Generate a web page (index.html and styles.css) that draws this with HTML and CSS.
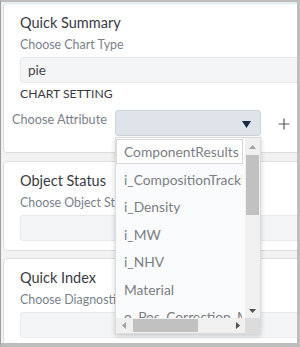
FILE: index.html
```html
<!DOCTYPE html>
<html>
<head>
<meta charset="utf-8">
<link rel="stylesheet" href="styles.css">
</head>
<body>
<div class="frame">
  <section class="card card-summary">
    <h2 class="card-title">Quick Summary</h2>
    <div class="field-label">Choose Chart Type</div>
    <div class="input-box"><span class="input-value">pie</span></div>
    <div class="section-head">CHART SETTING</div>
    <div class="attr-row">
      <div class="attr-label">Choose Attribute</div>
      <div class="select-wrap">
        <div class="select-box">
          <svg class="select-arrow" width="9" height="7" viewBox="0 0 9 7"><path d="M0 0 H9 L4.5 7 Z" fill="#1b2845"/></svg>
        </div>
        <div class="dropdown">
          <div class="dd-body">
            <ul class="dd-list">
              <li class="dd-item dd-item-active">ComponentResults</li>
              <li class="dd-item">i_CompositionTracking</li>
              <li class="dd-item">i_Density</li>
              <li class="dd-item">i_MW</li>
              <li class="dd-item">i_NHV</li>
              <li class="dd-item">Material</li>
              <li class="dd-item">o_Pos_Correction_Mode</li>
            </ul>
            <div class="vscroll">
              <svg class="sb-arrow" width="15" height="14" viewBox="0 0 15 14"><path d="M4 9 H11 L7.5 5 Z" fill="#a3a3a3"/></svg>
              <div class="vthumb-area"><div class="vthumb"></div></div>
              <svg class="sb-arrow" width="15" height="14" viewBox="0 0 15 14"><path d="M4 5 H11 L7.5 9 Z" fill="#505050"/></svg>
            </div>
          </div>
          <div class="hscroll">
            <div class="hscroll-track">
              <svg class="sb-arrow" width="14" height="15" viewBox="0 0 14 15"><path d="M9 4 V11 L5 7.5 Z" fill="#a3a3a3"/></svg>
              <div class="hthumb-area"><div class="hthumb"></div></div>
              <svg class="sb-arrow" width="14" height="15" viewBox="0 0 14 15"><path d="M5 4 V11 L9 7.5 Z" fill="#505050"/></svg>
            </div>
            <div class="sb-corner"></div>
          </div>
        </div>
      </div>
      <svg class="plus" width="12" height="12" viewBox="0 0 12 12"><path d="M6 0.5 V11.5 M0.5 6 H11.5" stroke="#5a5a5a" stroke-width="1.2"/></svg>
    </div>
  </section>
  <section class="card card-status">
    <h2 class="card-title">Object Status</h2>
    <div class="field-label">Choose Object Status</div>
    <div class="input-box"></div>
  </section>
  <section class="card card-index">
    <h2 class="card-title">Quick Index</h2>
    <div class="field-label">Choose Diagnostic Index</div>
    <div class="input-box"></div>
  </section>
</div>
</body>
</html>
```

FILE: styles.css
```css
* { box-sizing: border-box; }
html, body { margin: 0; padding: 0; }
body {
  width: 300px;
  height: 347px;
  overflow: hidden;
  font-family: Lato, "Open Sans", sans-serif;
  background: #f3f3f3;
}
.frame {
  width: 300px;
  height: 347px;
  overflow: hidden;
  background: #f2f2f2;
  border-left: 1px solid #9e9e9e;
  border-top: 2px solid #bdbdbd;
  border-right: 3px solid #bdbdbd;
  border-bottom: 4px solid #bdbdbd;
  padding: 1px 0 0 2px;
}
.card {
  background: #fff;
  border: 1px solid #dedede;
  border-radius: 4px;
  margin-right: -12px;
  padding: 9px 0 10px 16px;
}
.card-summary { border-top-color: #d5ecee; padding-bottom: 16px; }
.card-status { margin-top: 8px; padding-bottom: 9px; }
.card-index { margin-top: 7px; }
.card-title {
  margin: 0;
  font-size: 14.5px;
  line-height: 20px;
  font-weight: 400;
  color: #3a3a44;
}
.field-label {
  margin-top: 2px;
  font-size: 12.4px;
  line-height: 20px;
  font-weight: 400;
  color: #7a818c;
  white-space: nowrap;
}
.input-box {
  margin-top: 2px;
  height: 26px;
  background: #f4f5f6;
  border: 1px solid #e8e9ea;
  border-radius: 3px;
  padding-left: 7px;
  display: flex;
  align-items: center;
}
.input-value { font-size: 13.5px; color: #44444c; }
.section-head {
  margin-top: 1px;
  font-size: 12.2px;
  line-height: 20px;
  color: #3a3a44;
}
.attr-row {
  margin-top: 6px;
  margin-left: -8px;
  display: flex;
  align-items: center;
  height: 26px;
}
.attr-label {
  width: 103px;
  font-size: 12.7px;
  font-weight: 400;
  color: #7a818c;
  white-space: nowrap;
  align-self: flex-start;
  line-height: 18px;
}
.select-wrap { position: relative; width: 146px; height: 26px; }
.select-box {
  height: 26px;
  background: #dfe4eb;
  border: 1px solid #cfd5dc;
  border-radius: 3px;
  display: flex;
  align-items: center;
  justify-content: flex-end;
  padding-right: 9px;
}
.select-arrow { display: block; margin-top: 2px; }
.plus { margin-left: 17px; margin-top: 2px; }
.dropdown {
  position: absolute;
  left: 0;
  top: 27px;
  width: 146px;
  background: #fafbfc;
  border: 1px solid #dcdcdc;
  box-shadow: 0 2px 5px rgba(0,0,0,0.18);
  z-index: 5;
}
.dd-body { display: flex; height: 180px; }
.dd-list {
  list-style: none;
  margin: 0;
  padding: 1px 0 0 0;
  width: 129px;
  overflow: hidden;
}
.dd-item {
  height: 25px;
  margin: 0 2px 2.5px 0;
  padding-left: 7px;
  font-size: 13.8px;
  line-height: 23px;
  font-weight: 400;
  color: #7b7e84;
  white-space: nowrap;
  overflow: hidden;
  border: 1px solid transparent;
}
.dd-item-active {
  background: #fff;
  border: 1px solid #d8d8d8;
}
.vscroll {
  width: 15px;
  background: #f0f0f0;
  display: flex;
  flex-direction: column;
  padding-top: 2px;
}
.sb-arrow { display: block; flex: none; }
.vthumb-area { flex: 1; padding: 1px 1px; }
.vthumb { width: 13px; height: 60px; background: #c1c1c1; }
.hscroll { display: flex; height: 15px; }
.hscroll-track {
  width: 129px;
  background: #f0f0f0;
  display: flex;
  align-items: center;
  padding-left: 1px;
}
.hthumb-area { flex: 1; padding: 1px 2px; }
.hthumb { width: 65px; height: 13px; background: #c1c1c1; }
.sb-corner { width: 15px; background: #dcdcdc; }
```
